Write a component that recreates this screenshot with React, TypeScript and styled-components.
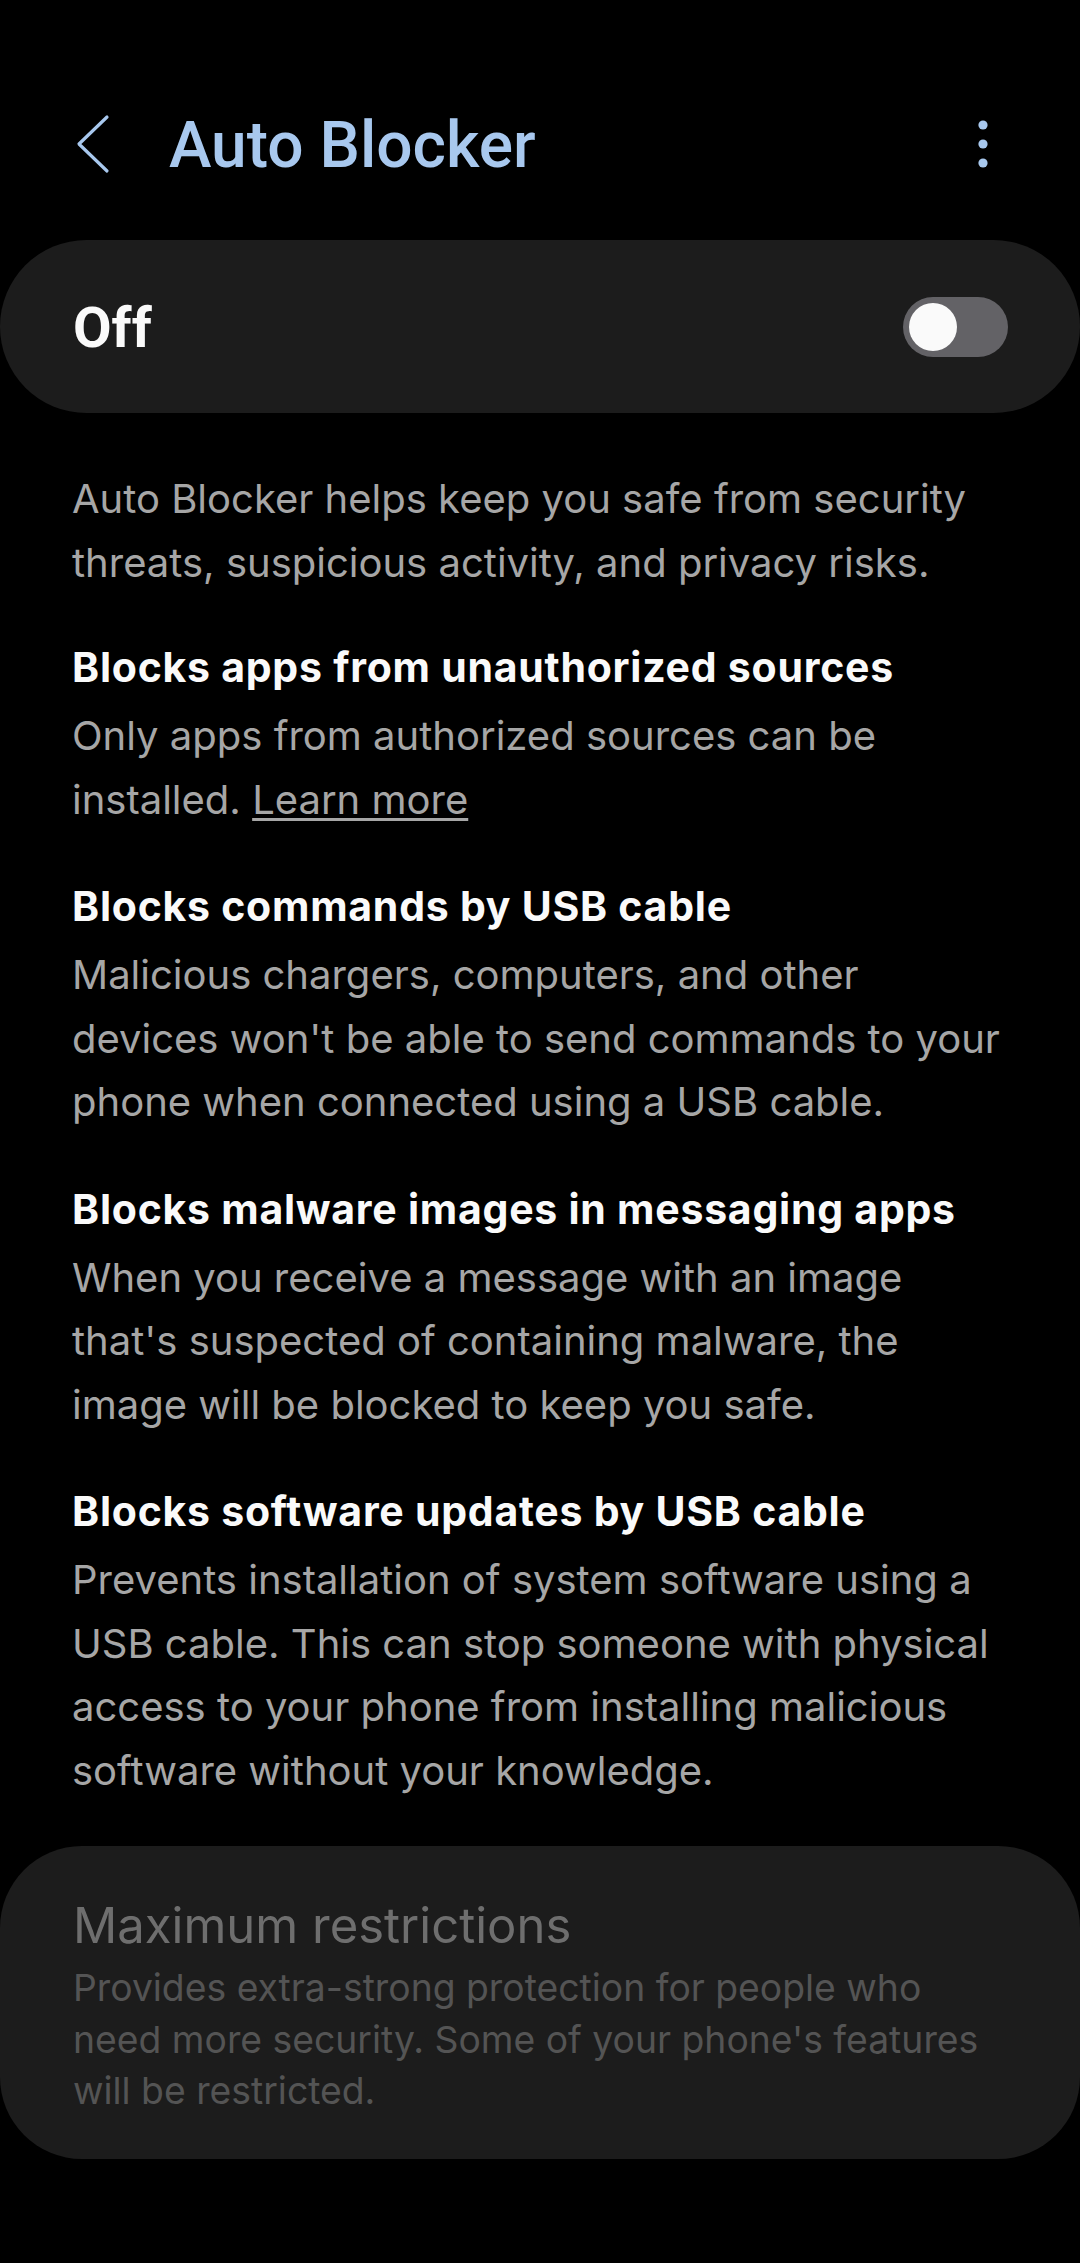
import React from "react";
import styled, { createGlobalStyle } from "styled-components";

const Global = createGlobalStyle`
  html, body { margin: 0; padding: 0; background: #000; }
  body { font-family: Inter, Roboto, "Noto Sans", "Liberation Sans", sans-serif; -webkit-font-smoothing: antialiased; }
  * { box-sizing: border-box; }
`;

const Page = styled.div`
  width: 1080px;
  min-height: 2263px;
  background: #000;
  display: flex;
  flex-direction: column;
`;

const Header = styled.header`
  display: flex;
  align-items: center;
  height: 80px;
  margin-top: 106px;
  padding: 0 85px 0 72px;
`;

const IconButton = styled.button`
  background: none;
  border: 0;
  padding: 0;
  display: flex;
  color: #a8c8ee;
`;

const Title = styled.h1`
  flex: 1;
  margin: 0 0 0 57px;
  font-family: Roboto, "Noto Sans", sans-serif;
  font-size: 64px;
  line-height: 80px;
  font-weight: 500;
  color: #a8c8ee;
  letter-spacing: 0;
`;

const SwitchCard = styled.div`
  margin-top: 54px;
  height: 173px;
  border-radius: 87px;
  background: #1c1c1c;
  display: flex;
  align-items: center;
  justify-content: space-between;
  padding: 0 72px 0 73px;
`;

const SwitchLabel = styled.span`
  font-family: Roboto, "Noto Sans", sans-serif;
  font-size: 56px;
  font-weight: 700;
  color: #fafafa;
  line-height: 1;
  padding-top: 2px;
`;

const Track = styled.div<{ $on: boolean }>`
  width: 105px;
  height: 60px;
  border-radius: 30px;
  background: ${(p) => (p.$on ? "#3e91ff" : "#636266")};
  display: flex;
  align-items: center;
  justify-content: ${(p) => (p.$on ? "flex-end" : "flex-start")};
  padding: 0 6px;
`;

const Knob = styled.div`
  width: 48px;
  height: 48px;
  border-radius: 50%;
  background: #fafafa;
`;

const Content = styled.div`
  padding: 54px 72px 0 72px;
  display: flex;
  flex-direction: column;
`;

const Intro = styled.p`
  margin: 0 0 45px 0;
  font-size: 40px;
  line-height: 63.5px;
  color: #a6a6a6;
`;

const Section = styled.section`
  margin-bottom: 47px;
`;

const SectionTitle = styled.h2`
  margin: 0;
  padding-bottom: 9px;
  font-size: 41px;
  line-height: 56px;
  font-weight: 700;
  letter-spacing: 0.75px;
  color: #fafafa;
`;

const SectionText = styled.p`
  margin: 0;
  font-size: 40px;
  line-height: 63.5px;
  color: #a6a6a6;
`;

const LearnMore = styled.a`
  display: inline-block;
  color: #a6a6a6;
  text-decoration: underline;
  text-decoration-thickness: 3px;
  text-underline-offset: 4px;
`;

const DimCard = styled.div`
  margin-top: -3px;
  background: #1c1c1c;
  border-radius: 82px;
  padding: 50px 72px 42px 73px;
  display: flex;
  flex-direction: column;
  gap: 6px;
`;

const DimTitle = styled.div`
  font-size: 49px;
  line-height: 60px;
  color: #6e6e6e;
`;

const DimText = styled.div`
  font-size: 37.3px;
  line-height: 51.5px;
  color: #545454;
`;

const BackIcon = () => (
  <svg width="40" height="80" viewBox="0 0 40 80" fill="none">
    <polyline
      points="35,11 7,38 35,65"
      stroke="currentColor"
      strokeWidth="3.2"
      strokeLinecap="round"
      strokeLinejoin="round"
    />
  </svg>
);

const MoreIcon = () => (
  <svg width="24" height="80" viewBox="0 0 24 80" fill="currentColor">
    <circle cx="12" cy="19" r="4.6" />
    <circle cx="12" cy="38" r="4.6" />
    <circle cx="12" cy="57" r="4.6" />
  </svg>
);

const sections = [
  {
    title: "Blocks commands by USB cable",
    text: "Malicious chargers, computers, and other devices won't be able to send commands to your phone when connected using a USB cable.",
  },
  {
    title: "Blocks malware images in messaging apps",
    text: "When you receive a message with an image that's suspected of containing malware, the image will be blocked to keep you safe.",
  },
  {
    title: "Blocks software updates by USB cable",
    text: "Prevents installation of system software using a USB cable. This can stop someone with physical access to your phone from installing malicious software without your knowledge.",
  },
];

export default function App() {
  return (
    <Page>
      <Global />
      <Header>
        <IconButton aria-label="Back">
          <BackIcon />
        </IconButton>
        <Title>Auto Blocker</Title>
        <IconButton aria-label="More options">
          <MoreIcon />
        </IconButton>
      </Header>

      <SwitchCard>
        <SwitchLabel>Off</SwitchLabel>
        <Track $on={false}>
          <Knob />
        </Track>
      </SwitchCard>

      <Content>
        <Intro>
          Auto Blocker helps keep you safe from security threats, suspicious
          activity, and privacy risks.
        </Intro>

        <Section>
          <SectionTitle>Blocks apps from unauthorized sources</SectionTitle>
          <SectionText>
            Only apps from authorized sources can be installed.{" "}
            <LearnMore>Learn more</LearnMore>
          </SectionText>
        </Section>

        {sections.map((s) => (
          <Section key={s.title}>
            <SectionTitle>{s.title}</SectionTitle>
            <SectionText>{s.text}</SectionText>
          </Section>
        ))}
      </Content>

      <DimCard>
        <DimTitle>Maximum restrictions</DimTitle>
        <DimText>
          Provides extra-strong protection for people who need more security.
          Some of your phone's features will be restricted.
        </DimText>
      </DimCard>
    </Page>
  );
}
